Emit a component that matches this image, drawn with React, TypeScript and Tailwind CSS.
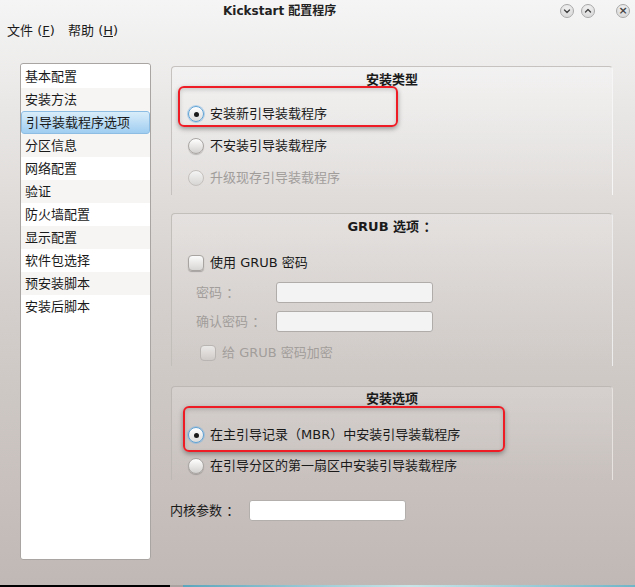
import React from "react";

const F = { fontFamily: '"DejaVu Sans", "Noto Sans CJK SC", sans-serif' };

function Radio({ checked, disabled }: { checked?: boolean; disabled?: boolean }) {
  return (
    <span
      className={
        "relative inline-flex h-[16px] w-[16px] shrink-0 items-center justify-center rounded-full border " +
        (checked
          ? "border-[#5fa3d6] bg-linear-to-b from-[#ffffff] to-[#dcdcdc] shadow-[0_0_0_1px_rgba(120,180,230,0.5)]"
          : disabled
          ? "border-[#c4c0bd] bg-linear-to-b from-[#f4f4f4] to-[#d8d6d4]"
          : "border-[#a9a6a4] bg-linear-to-b from-[#ffffff] to-[#d3d1cf] shadow-[0_1px_1px_rgba(0,0,0,0.2)]")
      }
    >
      {checked && <span className="h-[5px] w-[5px] rounded-full bg-[#1a1a1a]" />}
    </span>
  );
}

function Check({ disabled }: { disabled?: boolean }) {
  return (
    <span
      className={
        "inline-block h-[16px] w-[16px] shrink-0 rounded-[4px] border " +
        (disabled
          ? "border-[#b9b5b2] bg-linear-to-b from-[#ebe9e8] to-[#cfcbc8]"
          : "border-[#a7a4a2] bg-linear-to-b from-[#fbfbfb] to-[#d8d6d4] shadow-[0_1px_1px_rgba(0,0,0,0.25)]")
      }
    />
  );
}

function Annot({ className }: { className: string }) {
  return (
    <div
      className={
        "pointer-events-none absolute rounded-[6px] border-2 border-[#ee1c24] shadow-[0_2px_5px_rgba(0,0,0,0.35),inset_0_2px_4px_rgba(0,0,0,0.15)] " +
        className
      }
    />
  );
}

const items = [
  "基本配置",
  "安装方法",
  "引导装载程序选项",
  "分区信息",
  "网络配置",
  "验证",
  "防火墙配置",
  "显示配置",
  "软件包选择",
  "预安装脚本",
  "安装后脚本",
];

const circle =
  "flex h-[14px] w-[14px] shrink-0 items-center justify-center rounded-full border border-[#a8a8a8] bg-[#ececec] shadow-[inset_0_-3px_4px_rgba(0,0,0,0.08)]";

export default function App() {
  return (
    <div
      style={F}
      className="flex h-[587px] w-[635px] flex-col overflow-hidden bg-linear-to-b from-[#f5f5f5] via-[#d5d0cd] to-[#c0b8b5] text-[13px] text-[#1a1a1a]"
    >
      {/* title bar */}
      <div className="flex h-[21px] w-[635px] shrink-0 items-center">
        <div className="ml-[223px] w-[337px] shrink-0 text-[12px] font-bold leading-none text-[#222]">
          Kickstart 配置程序
        </div>
        <div className={circle}>
          <svg width="8" height="8" viewBox="0 0 8 8" fill="none" stroke="#444" strokeWidth="1.4" strokeLinecap="round" strokeLinejoin="round">
            <path d="M1.5 3 L4 5.5 L6.5 3" />
          </svg>
        </div>
        <div className="w-[7px] shrink-0" />
        <div className={circle}>
          <svg width="8" height="8" viewBox="0 0 8 8" fill="none" stroke="#444" strokeWidth="1.4" strokeLinecap="round" strokeLinejoin="round">
            <path d="M1.5 5 L4 2.5 L6.5 5" />
          </svg>
        </div>
        <div className="w-[21px] shrink-0" />
        <div className={circle + " text-[11px] leading-none font-bold text-[#444]"}>×</div>
      </div>

      {/* menu */}
      <div className="flex h-[20px] shrink-0 items-center pl-[7px] text-[13px]">
        <span className="w-[61px]">
          文件 (<span className="underline">F</span>)
        </span>
        <span>
          帮助 (<span className="underline">H</span>)
        </span>
      </div>

      {/* content */}
      <div className="mt-[22px] flex pl-[20px]">
        {/* list */}
        <div className="h-[497px] w-[131px] shrink-0 overflow-hidden rounded-[3px] border border-[#a9a5a3] bg-white pt-px">
          {items.map((t, i) => (
            <div
              key={t}
              className={
                "flex h-[23px] items-center pl-[4px] " +
                (i === 2
                  ? "rounded-[3px] border border-[#8dbde3] bg-linear-to-b from-[#d9edfa] to-[#9fcdf0]"
                  : i % 2 === 1
                  ? "bg-[#f6f5f4]"
                  : "bg-white")
              }
            >
              {t}
            </div>
          ))}
        </div>

        {/* right column */}
        <div className="ml-[20px] mt-[3px] flex w-[442px] flex-col">
          {/* group 1 */}
          <div className="relative h-[129px] rounded-t-[4px] border border-b-0 border-[#c6c2bf] border-r-[#f6f6f6] bg-linear-to-b from-white/30 to-white/0 pt-[5px]">
            <div className="h-[16px] text-center font-bold leading-[16px]">安装类型</div>
            <div className="mt-[10px] flex flex-col pl-[16px]">
              <div className="flex h-[32px] items-center gap-[6px]">
                <Radio checked />
                <span>安装新引导装载程序</span>
              </div>
              <div className="flex h-[32px] items-center gap-[6px]">
                <Radio />
                <span>不安装引导装载程序</span>
              </div>
              <div className="flex h-[32px] items-center gap-[6px] text-[#a19d9b]">
                <Radio disabled />
                <span>升级现存引导装载程序</span>
              </div>
            </div>
            <Annot className="left-[6px] top-[19px] h-[41px] w-[220px]" />
          </div>

          {/* group 2 */}
          <div className="mt-[18px] h-[153px] rounded-t-[4px] border border-b-0 border-[#c2beba] border-r-[#ededed] bg-linear-to-b from-white/20 to-white/0 pt-[5px]">
            <div className="h-[16px] text-center font-bold leading-[16px]">GRUB 选项 ：</div>
            <div className="mt-[16px] flex h-[24px] items-center gap-[6px] pl-[16px]">
              <Check />
              <span>使用 GRUB 密码</span>
            </div>
            <div className="mt-[7px] flex h-[21px] items-center pl-[24px] text-[#a29e9b]">
              <span className="w-[80px]">密码 ：</span>
              <span className="h-[21px] w-[157px] rounded-[3px] border border-[#b0acaa] bg-[#f3f3f3]" />
            </div>
            <div className="mt-[8px] flex h-[21px] items-center pl-[24px] text-[#a29e9b]">
              <span className="w-[80px]">确认密码 ：</span>
              <span className="h-[21px] w-[157px] rounded-[3px] border border-[#b0acaa] bg-[#f3f3f3]" />
            </div>
            <div className="mt-[10px] flex h-[21px] items-center gap-[6px] pl-[28px] text-[#a29e9b]">
              <Check disabled />
              <span>给 GRUB 密码加密</span>
            </div>
          </div>

          {/* group 3 */}
          <div className="relative mt-[20px] h-[94px] rounded-t-[4px] border border-b-0 border-[#bdb8b4] border-r-[#e6e3e1] bg-linear-to-b from-white/15 to-white/0 pt-[4px]">
            <div className="h-[16px] text-center font-bold leading-[16px]">安装选项</div>
            <div className="mt-[12px] flex flex-col pl-[16px]">
              <div className="flex h-[32px] items-center gap-[6px]">
                <Radio checked />
                <span>在主引导记录（MBR）中安装引导装载程序</span>
              </div>
              <div className="flex h-[30px] items-center gap-[6px]">
                <Radio />
                <span>在引导分区的第一扇区中安装引导装载程序</span>
              </div>
            </div>
            <Annot className="left-[11px] top-[19px] h-[46px] w-[322px]" />
          </div>

          {/* kernel params */}
          <div className="mt-[20px] flex h-[21px] items-center">
            <span className="-ml-px w-[79px]">内核参数 ：</span>
            <span className="h-[21px] w-[157px] rounded-[3px] border border-[#b3afad] bg-white" />
          </div>
        </div>
      </div>

      <div className="flex-1" />
      <div className="flex h-[2px] shrink-0">
        <div className="w-[170px] bg-black" />
        <div className="w-[13px] bg-[#a8a2a0]" />
        <div className="flex-1 bg-linear-to-r from-[#5aa6bc] via-[#c8e6e8] to-[#6fb6c8]" />
      </div>
    </div>
  );
}
